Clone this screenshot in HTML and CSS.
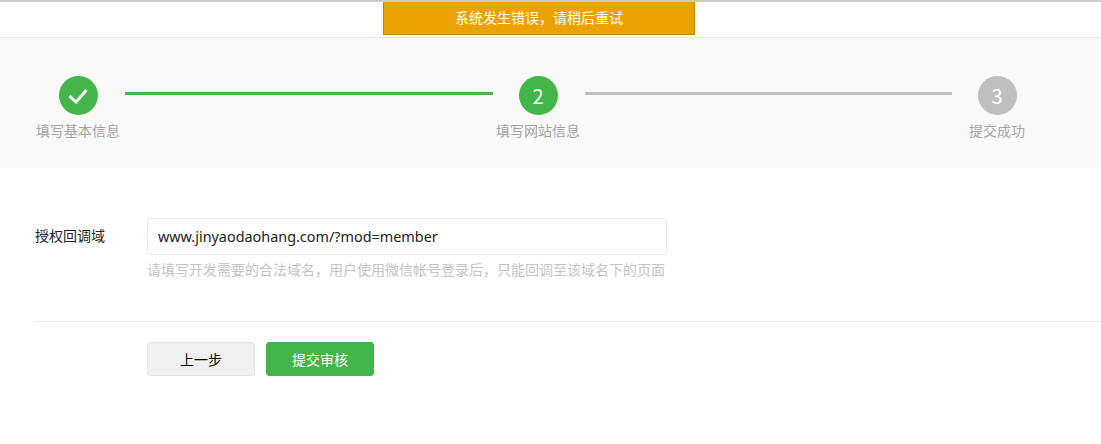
FILE: index.html
```html
<!DOCTYPE html>
<html>
  <head>
    <title>填写网站信息</title>
    <link rel="stylesheet" href="styles.css">
  </head>
  <body>
    <div class="toast">系统发生错误，请稍后重试</div>
    <div class="top-space"></div>

    <div class="steps">
      <div class="step done">
        <span class="circle">
          <svg width="20" height="16" viewBox="0 0 20 16">
            <path d="M1.5 8l6.5 6L18.5 2" fill="none" stroke="#fff" stroke-width="3"/>
          </svg>
        </span>
        <span class="step-name">填写基本信息</span>
      </div>
      <div class="line done"></div>
      <div class="step done">
        <span class="circle">2</span>
        <span class="step-name">填写网站信息</span>
      </div>
      <div class="line"></div>
      <div class="step">
        <span class="circle">3</span>
        <span class="step-name">提交成功</span>
      </div>
    </div>

    <div class="form-row">
      <label class="form-label" for="domain">授权回调域</label>
      <div class="form-field">
        <input type="text" id="domain" value="www.jinyaodaohang.com/?mod=member" />
        <p class="hint">请填写开发需要的合法域名，用户使用微信帐号登录后，只能回调至该域名下的页面</p>
      </div>
    </div>

    <div class="actions">
      <button class="btn">上一步</button>
      <button class="btn primary">提交审核</button>
    </div>
  </body>
</html>
```

FILE: styles.css
```css
body {
  margin: 0;
  font-family: "Noto Sans CJK SC", "Noto Sans", sans-serif;
  font-size: 14px;
  color: #222;
  background-color: #fff;
  border-top: 2px solid #ccc;
}

.top-space {
  height: 35px;
  border-bottom: 1px solid #e7e7eb;
}

.toast {
  position: absolute;
  top: 2px;
  left: 383px;
  width: 310px;
  height: 32px;
  line-height: 31px;
  text-align: center;
  color: #fff;
  background-color: #eba200;
  border: solid #c28600;
  border-width: 0 1px 1px;
}

.steps {
  display: flex;
  align-items: flex-start;
  height: 92px;
  padding: 38px 62px 0 36px;
  background-color: #f9f9f9;
}

.step {
  width: 84px;
  flex: none;
  text-align: center;
}

.step-name {
  display: block;
  margin-top: 4px;
  line-height: 22px;
  color: #a3a3a3;
}

.circle {
  display: flex;
  align-items: center;
  justify-content: center;
  width: 39px;
  height: 39px;
  margin: 0 auto;
  border-radius: 50%;
  background-color: #bfbfbf;
  color: #fff;
  font-size: 20px;
}

.step.done .circle {
  background-color: #44b549;
}

.line {
  flex: 1;
  height: 3px;
  margin: 16px 3px 0 5px;
  background-color: #bfbfbf;
}

.line.done {
  flex: none;
  width: 368px;
  background-color: #44b549;
}

.form-row {
  display: flex;
  padding: 50px 0 0 35px;
}

.form-label {
  width: 112px;
  line-height: 34px;
}

.form-field {
  width: 520px;
}

input {
  display: block;
  width: 100%;
  height: 37px;
  box-sizing: border-box;
  padding: 0 10px;
  border: 1px solid #e7e7eb;
  border-radius: 3px;
  font-family: "Noto Sans", sans-serif;
  font-size: 14.4px;
  color: #222;
}

.hint {
  margin: 3px 0 0;
  line-height: 22px;
  color: #c4c4c4;
  white-space: nowrap;
}

.actions {
  display: flex;
  gap: 11px;
  margin: 41px 0 0 35px;
  padding: 20px 0 0 112px;
  border-top: 1px solid #e7e7eb;
}

.btn {
  width: 108px;
  height: 34px;
  padding: 0;
  border: 1px solid #e4e4e4;
  border-radius: 3px;
  background-color: #f0f0f0;
  color: #000;
  font-family: inherit;
  font-size: 14px;
}

.btn.primary {
  border-color: #44b549;
  background-color: #44b549;
  color: #fff;
}
```
